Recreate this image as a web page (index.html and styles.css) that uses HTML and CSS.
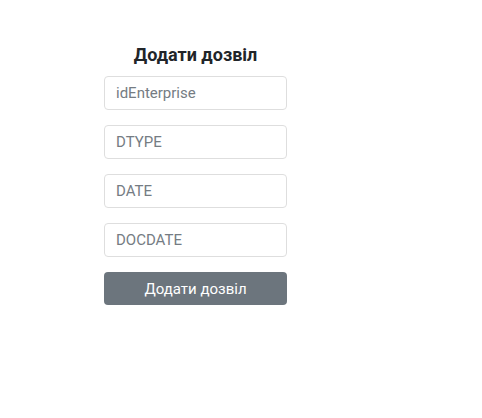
FILE: index.html
```html
<!DOCTYPE html>
<html lang="uk">

<head>
    <meta charset="UTF-8">
    <meta name="viewport" content="width=device-width, initial-scale=1.0">
    <title>Додати дозвіл</title>
    <link rel="stylesheet" href="styles.css">
</head>

<body>
    <form class="form">
        <h2 class="title">Додати дозвіл</h2>
        <input class="field" type="text" placeholder="idEnterprise">
        <input class="field" type="text" placeholder="DTYPE">
        <input class="field" type="text" placeholder="DATE">
        <input class="field" type="text" placeholder="DOCDATE">
        <button class="button" type="button">Додати дозвіл</button>
    </form>
</body>

</html>
```

FILE: styles.css
```css
body {
    margin: 0;
    background-color: #fff;
    font-family: Roboto, "Liberation Sans", sans-serif;
    color: #212529;
}

.form {
    display: flex;
    flex-direction: column;
    gap: 15px;
    width: 183px;
    margin-left: 104px;
    padding-top: 43px;
}

.title {
    margin: 0 0 -6px;
    font-size: 18px;
    font-weight: 700;
    text-align: center;
    line-height: 24px;
}

.field {
    box-sizing: border-box;
    height: 34px;
    padding: 0 11px;
    border: 1px solid #dedede;
    border-radius: 4px;
    font-family: inherit;
    font-size: 15px;
    color: #495057;
}

.field::placeholder {
    color: #757c83;
}

.button {
    height: 33px;
    border: none;
    border-radius: 4px;
    background-color: #6c757d;
    color: #fff;
    font-family: inherit;
    font-size: 15px;
}
```
